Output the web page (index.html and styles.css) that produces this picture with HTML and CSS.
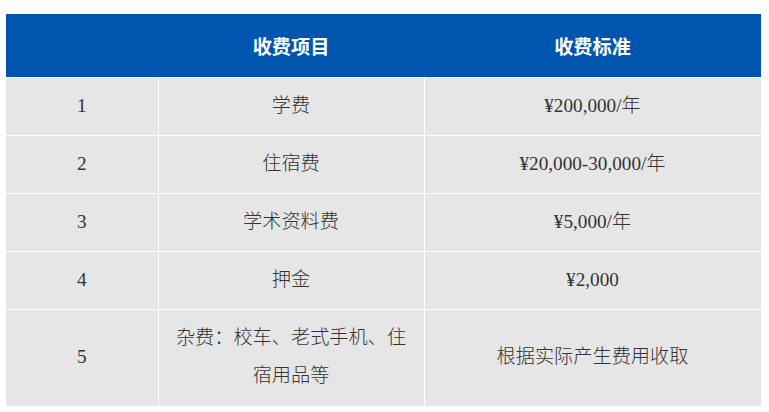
FILE: index.html
```html
<!DOCTYPE html>
<html lang="zh-CN">
<head>
<meta charset="utf-8">
<title>收费标准</title>
<link rel="stylesheet" href="styles.css">
</head>
<body>
<table class="fee-table">
  <colgroup>
    <col class="c-no">
    <col class="c-item">
    <col class="c-std">
  </colgroup>
  <thead>
    <tr>
      <th></th>
      <th>收费项目</th>
      <th>收费标准</th>
    </tr>
  </thead>
  <tbody>
    <tr><td>1</td><td>学费</td><td>¥200,000/年</td></tr>
    <tr><td>2</td><td>住宿费</td><td>¥20,000-30,000/年</td></tr>
    <tr><td>3</td><td>学术资料费</td><td>¥5,000/年</td></tr>
    <tr><td>4</td><td>押金</td><td>¥2,000</td></tr>
    <tr class="last"><td>5</td><td>杂费：校车、老式手机、住宿用品等</td><td>根据实际产生费用收取</td></tr>
  </tbody>
</table>
</body>
</html>
```
FILE: styles.css
```css
html, body {
  margin: 0;
  padding: 0;
  background: #ffffff;
}

.fee-table {
  margin: 14px 0 0 6px;
  width: 755px;
  table-layout: fixed;
  border-collapse: collapse;
  font-family: "Liberation Serif", "Noto Sans CJK SC", serif;
  font-size: 19.2px;
  line-height: 38px;
  color: #333333;
}

.c-no { width: 152px; }
.c-item { width: 266px; }
.c-std { width: 337px; }

.fee-table th {
  background: #0056ae;
  color: #ffffff;
  font-family: "Noto Sans CJK SC", sans-serif;
  font-weight: 700;
  height: 63px;
  padding: 0 10px;
  text-align: center;
  border: none;
}

.fee-table td {
  background: #e6e6e6;
  text-align: center;
  font-weight: 300;
  padding: 9px 10px 10px;
  border-top: 1px solid #ffffff;
  border-left: 1px solid #ffffff;
  vertical-align: middle;
}

.fee-table .last td {
  padding-bottom: 11px;
}

.fee-table td:first-child {
  border-left: none;
}

.fee-table td:last-child {
  border-right: 1px solid #ffffff;
}
```
